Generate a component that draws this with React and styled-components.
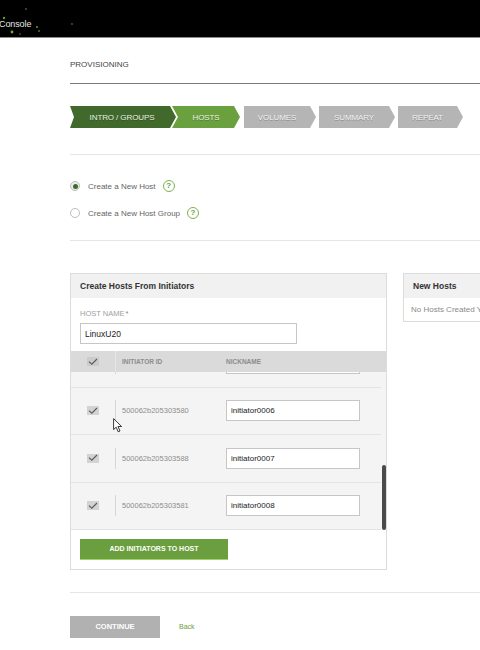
import React, { useLayoutEffect, useRef } from "react";
import styled, { createGlobalStyle } from "styled-components";

const GlobalStyle = createGlobalStyle`
  html, body {
    margin: 0;
    padding: 0;
    background: #fff;
  }
  body {
    width: 480px;
    height: 650px;
    overflow: hidden;
    font-family: "Liberation Sans", Arial, Helvetica, sans-serif;
    color: #333;
  }
  * { box-sizing: border-box; }
`;

const steps = [
  { label: "INTRO / GROUPS", w: 106, tone: "done" },
  { label: "HOSTS", w: 68, tone: "active", gap: -4 },
  { label: "VOLUMES", w: 72, tone: "todo", gap: 4 },
  { label: "SUMMARY", w: 76, tone: "todo", gap: 3 },
  { label: "REPEAT", w: 65, tone: "todo", gap: 3 },
];

const initiators = [
  ["500062b205303570", "initiator0001"],
  ["500062b205303572", "initiator0002"],
  ["500062b205303574", "initiator0003"],
  ["500062b205303578", "initiator0004"],
  ["500062b205303584", "initiator0005"],
  ["500062b205303580", "initiator0006"],
  ["500062b205303588", "initiator0007"],
  ["500062b205303581", "initiator0008"],
];

const Check = ({ dark }) => (
  <CheckBox $dark={dark}>
    <svg width="10" height="8" viewBox="0 0 10 8">
      <path d="M1 3.6 L3.8 6.2 L9 1" fill="none" stroke="#5a5a5a" strokeWidth="1.1" />
    </svg>
  </CheckBox>
);

const Help = () => <HelpIcon>?</HelpIcon>;

const App = () => {
  const scrollRef = useRef(null);

  useLayoutEffect(() => {
    if (scrollRef.current) {
      scrollRef.current.scrollTop = scrollRef.current.scrollHeight;
    }
  }, []);

  return (
    <Page>
      <GlobalStyle />
      <TopBar>
        <Specks width="130" height="37" viewBox="0 0 130 37">
          <circle cx="4" cy="18" r="1.2" fill="#5f9a2e" />
          <circle cx="12" cy="32" r="1.4" fill="#6fae3a" />
          <circle cx="26" cy="9" r="0.9" fill="#3c6a20" />
          <circle cx="37" cy="27" r="1" fill="#5f9a2e" />
          <circle cx="39" cy="31" r="0.8" fill="#7fbf45" />
          <circle cx="72" cy="24" r="0.9" fill="#3c6a20" />
          <circle cx="20" cy="34" r="0.8" fill="#4e8a2a" />
        </Specks>
        <Brand>Console</Brand>
      </TopBar>

      <Main>
        <TitleBar>PROVISIONING</TitleBar>

        <Steps>
          {steps.map((s) => (
            <Step key={s.label} $w={s.w} $tone={s.tone} $gap={s.gap || 0}>
              {s.label}
            </Step>
          ))}
        </Steps>

        <Divider />

        <Options>
          <Option>
            <Radio $checked />
            <OptionLabel>Create a New Host</OptionLabel>
            <Help />
          </Option>
          <Option>
            <Radio />
            <OptionLabel>Create a New Host Group</OptionLabel>
            <Help />
          </Option>
        </Options>

        <Divider $top={0} />

        <Panels>
          <Panel $w={317}>
            <PanelHead>Create Hosts From Initiators</PanelHead>
            <PanelBody>
              <FieldLabel>
                HOST NAME<Star>*</Star>
              </FieldLabel>
              <TextInput $w={217} defaultValue="LinuxU20" />
            </PanelBody>

            <TableHead>
              <CheckCell>
                <Check dark />
              </CheckCell>
              <HeadCell $w={111} $divider>INITIATOR ID</HeadCell>
              <HeadCell $w={134}>NICKNAME</HeadCell>
            </TableHead>

            <ScrollWrap>
              <ScrollArea ref={scrollRef}>
                {initiators.map(([id, nick]) => (
                  <Row key={id}>
                    <CheckCell>
                      <Check />
                    </CheckCell>
                    <IdCell>{id}</IdCell>
                    <TextInput $w={134} $small defaultValue={nick} />
                  </Row>
                ))}
              </ScrollArea>
              <ScrollThumb />
            </ScrollWrap>

            <PanelFoot>
              <GreenButton>ADD INITIATORS TO HOST</GreenButton>
            </PanelFoot>
          </Panel>

          <Panel $w={220}>
            <PanelHead>New Hosts</PanelHead>
            <EmptyNote>No Hosts Created Yet</EmptyNote>
          </Panel>
        </Panels>

        <Divider $top={22} />

        <Actions>
          <GrayButton>CONTINUE</GrayButton>
          <BackLink>Back</BackLink>
        </Actions>
      </Main>

      <Cursor width="10" height="15" viewBox="0 0 10 15">
        <path
          d="M0.6 0.6 L0.6 11.6 L3.2 9.2 L5.2 13.8 L7 13 L5 8.5 L8.6 8.5 Z"
          fill="#fff"
          stroke="#222"
          strokeWidth="0.9"
          strokeLinejoin="round"
        />
      </Cursor>
    </Page>
  );
};

export default App;

const Page = styled.div`
  position: relative;
  width: 480px;
  height: 650px;
  overflow: hidden;
`;

const TopBar = styled.div`
  position: relative;
  height: 38px;
  background: #000;
  border-bottom: 1px solid #8d8d8d;
  display: flex;
  align-items: center;
  padding-top: 11px;
`;

const Specks = styled.svg`
  position: absolute;
  left: 0;
  top: 0;
`;

const Brand = styled.span`
  position: relative;
  margin-left: -1px;
  font-size: 9px;
  color: #e6e6e6;
  letter-spacing: -0.1px;
`;

const Main = styled.div`
  width: 640px;
  padding-left: 70px;
`;

const TitleBar = styled.div`
  height: 46px;
  padding-top: 8px;
  display: flex;
  align-items: center;
  font-size: 8px;
  color: #444;
  border-bottom: 1px solid #7a7a7a;
`;

const Steps = styled.div`
  display: flex;
  margin-top: 22px;
  height: 22px;
`;

const stepBg = { done: "#41692c", active: "#6aa03d", todo: "#b5b5b5" };
const stepClip = {
  done: "polygon(0 0, calc(100% - 6px) 0, 100% 50%, calc(100% - 6px) 100%, 0 100%, 4px 50%)",
  active: "polygon(0 0, calc(100% - 6px) 0, 100% 50%, calc(100% - 6px) 100%, 0 100%, 6px 50%)",
  todo: "polygon(0 0, calc(100% - 6px) 0, 100% 50%, calc(100% - 6px) 100%, 0 100%)",
};
const stepPad = { done: "0 6px 0 4px", active: "0 6px 0 6px", todo: "0 6px 0 0" };

const Step = styled.div`
  width: ${(p) => p.$w}px;
  margin-left: ${(p) => p.$gap}px;
  background: ${(p) => stepBg[p.$tone]};
  clip-path: ${(p) => stepClip[p.$tone]};
  padding: ${(p) => stepPad[p.$tone]};
  display: flex;
  align-items: center;
  justify-content: center;
  font-size: 8px;
  color: ${(p) => (p.$tone === "todo" ? "#f2f2f2" : "#e9f2e2")};
  text-shadow: 0 1px 0 rgba(0, 0, 0, 0.25);
  letter-spacing: -0.1px;
  white-space: nowrap;
`;

const Divider = styled.div`
  margin-top: ${(p) => (p.$top === undefined ? 26 : p.$top)}px;
  border-top: 1px solid #e6e6e6;
`;

const Options = styled.div`
  display: flex;
  flex-direction: column;
  gap: 13px;
  padding: 24px 0 20px;
`;

const Option = styled.div`
  display: flex;
  align-items: center;
  height: 14px;
`;

const Radio = styled.span`
  width: 10px;
  height: 10px;
  border-radius: 50%;
  border: 1px solid #bdbdbd;
  background: ${(p) => (p.$checked ? "#ececec" : "#fff")};
  display: flex;
  align-items: center;
  justify-content: center;
  margin-right: 8px;

  &::after {
    content: "";
    display: ${(p) => (p.$checked ? "block" : "none")};
    width: 5px;
    height: 5px;
    border-radius: 50%;
    background: #3e6a2a;
  }
`;

const OptionLabel = styled.span`
  font-size: 8px;
  color: #666;
  margin-right: 7px;
`;

const HelpIcon = styled.span`
  width: 12px;
  height: 12px;
  border-radius: 50%;
  border: 1.3px solid #7cb24b;
  color: #6aa03d;
  font-size: 8px;
  font-weight: bold;
  display: flex;
  align-items: center;
  justify-content: center;
  line-height: 1;
`;

const Panels = styled.div`
  display: flex;
  align-items: flex-start;
  gap: 16px;
  margin-top: 32px;
`;

const Panel = styled.div`
  width: ${(p) => p.$w}px;
  border: 1px solid #dcdcdc;
  background: #fff;
`;

const PanelHead = styled.div`
  height: 24px;
  background: #f1f1f1;
  display: flex;
  align-items: center;
  padding-left: 9px;
  font-size: 8.5px;
  font-weight: bold;
  color: #333;
`;

const PanelBody = styled.div`
  padding: 11px 9px 7px;
`;

const FieldLabel = styled.div`
  font-size: 7.5px;
  line-height: 10px;
  color: #a0a0a0;
  margin-bottom: 4px;
`;

const Star = styled.span`
  margin-left: 1px;
  color: #888;
`;

const TextInput = styled.input`
  display: block;
  width: ${(p) => p.$w}px;
  height: 21px;
  border: 1px solid #c6c6c6;
  background: #fff;
  padding: 0 4px;
  font-family: inherit;
  font-size: ${(p) => (p.$small ? "8px" : "8.5px")};
  color: #222;
  outline: none;
  margin: 0;
`;

const TableHead = styled.div`
  display: flex;
  align-items: stretch;
  height: 21px;
  background: #dadada;
`;

const CheckCell = styled.div`
  width: 44px;
  flex-shrink: 0;
  display: flex;
  align-items: center;
  justify-content: center;
`;

const CheckBox = styled.span`
  width: 12px;
  height: 9px;
  background: ${(p) => (p.$dark ? "#cbcbcb" : "#d3d3d3")};
  display: flex;
  align-items: center;
  justify-content: center;
`;

const HeadCell = styled.div`
  width: ${(p) => p.$w}px;
  flex-shrink: 0;
  display: flex;
  align-items: center;
  padding-left: ${(p) => (p.$divider ? 6 : 0)}px;
  border-left: ${(p) => (p.$divider ? "1px solid #e6e6e6" : "none")};
  font-size: 6.5px;
  font-weight: bold;
  color: #8c8c8c;
`;

const ScrollWrap = styled.div`
  position: relative;
`;

const ScrollArea = styled.div`
  height: 158px;
  overflow-y: scroll;
  background: #f4f4f4;
  padding-right: 5px;
  scrollbar-width: none;

  &::-webkit-scrollbar {
    display: none;
  }
`;

const ScrollThumb = styled.div`
  position: absolute;
  right: 0;
  bottom: 0;
  width: 4px;
  height: 65px;
  border-radius: 2px;
  background: #4a4a4a;
`;

const Row = styled.div`
  display: flex;
  align-items: center;
  height: 47.5px;
  border-bottom: 1px solid #e4e4e4;
`;

const IdCell = styled.div`
  width: 111px;
  flex-shrink: 0;
  height: 21px;
  line-height: 21px;
  padding-left: 6px;
  border-left: 1px solid #d6d6d6;
  font-size: 7.5px;
  color: #8e8e8e;
`;

const PanelFoot = styled.div`
  padding: 7px 9px 9px;
`;

const GreenButton = styled.button`
  width: 148px;
  height: 21px;
  border: none;
  border-bottom: 1px solid #9fd36a;
  background: #6a9e3e;
  color: #fff;
  font-family: inherit;
  font-size: 7px;
  font-weight: bold;
  padding: 0;
  margin: 0;
`;

const EmptyNote = styled.div`
  height: 23px;
  display: flex;
  align-items: center;
  padding-left: 7px;
  font-size: 8px;
  color: #8a8a8a;
  white-space: nowrap;
`;

const Actions = styled.div`
  display: flex;
  align-items: center;
  gap: 19px;
  margin-top: 23px;
`;

const GrayButton = styled.button`
  width: 90px;
  height: 22px;
  border: none;
  background: #b1b1b1;
  color: #fff;
  font-family: inherit;
  font-size: 7.5px;
  font-weight: bold;
  padding: 0;
  margin: 0;
`;

const BackLink = styled.a`
  font-size: 7px;
  color: #6aa03d;
  text-decoration: none;
`;

const Cursor = styled.svg`
  position: absolute;
  left: 113px;
  top: 418px;
`;
